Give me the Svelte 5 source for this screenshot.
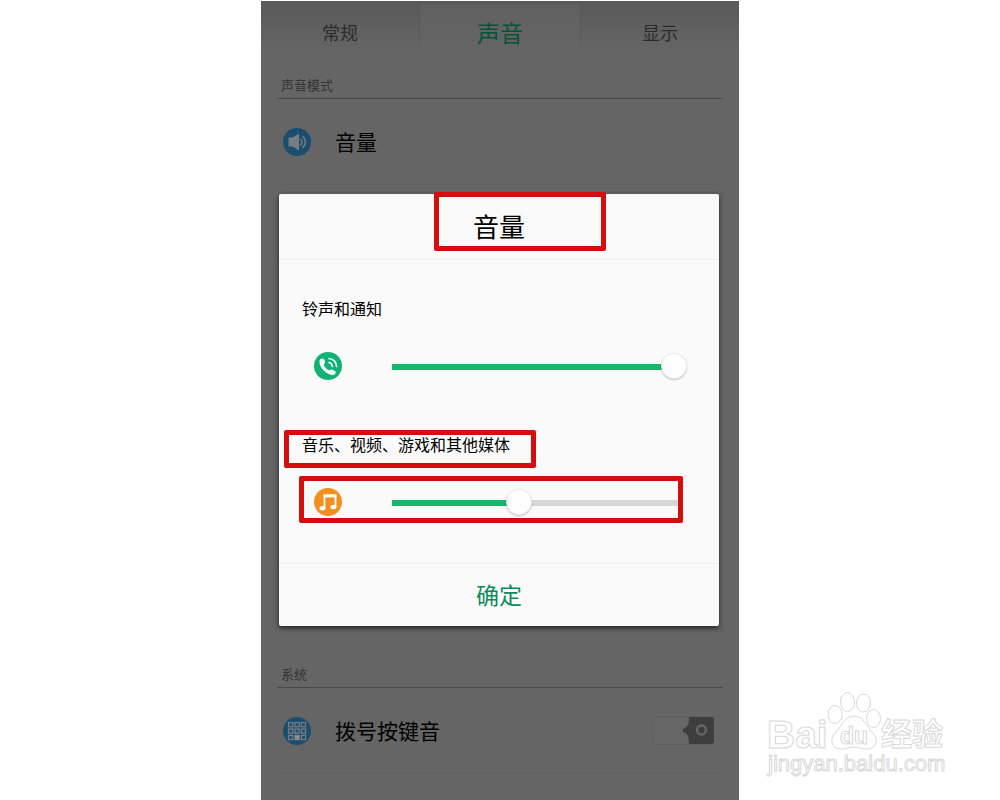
<script>
    let tabs = ["常规", "声音", "显示"];
    let activeTab = "声音";
    let keyTone = false;
    let open = true;

    let volumes = [
        { id: "ring", label: "铃声和通知", value: 100 },
        { id: "media", label: "音乐、视频、游戏和其他媒体", value: 45 },
    ];
</script>

<main class="page">
    <div class="phone">
        <nav class="tabs">
            {#each tabs as tab}
                <button
                    class="tab"
                    class:active={tab === activeTab}
                    on:click={() => (activeTab = tab)}
                >
                    {tab}
                </button>
            {/each}
        </nav>

        <section class="modes">
            <h2>声音模式</h2>
            <div class="row">
                <svg class="icon" viewBox="0 0 28 28" aria-hidden="true">
                    <circle cx="14" cy="14" r="14" fill="#1b4d70" />
                    <path d="M5.500 9.500h4l6.500-4v17l-6.500-4h-4z" fill="#777d81" />
                    <path
                        d="M17.500 11q3 3 0 6M20 8.500q5 5.500 0 11"
                        fill="none"
                        stroke="#777d81"
                        stroke-width="1.500"
                        stroke-linecap="round"
                    />
                </svg>
                <span>音量</span>
            </div>
        </section>

        <section class="system">
            <h2>系统</h2>
            <div class="row">
                <svg class="icon" viewBox="0 0 28 28" aria-hidden="true">
                    <circle cx="14" cy="14" r="14" fill="#1b4d70" />
                    <g fill="none" stroke="#777d81" stroke-width="1.300">
                        {#each [5.6, 12, 18.4] as y}
                            {#each [5.6, 12, 18.4] as x}
                                <rect {x} {y} width="4.200" height="4.200" />
                            {/each}
                        {/each}
                    </g>
                    <rect x="12" y="18.400" width="4.200" height="4.200" fill="#8a8f92" />
                </svg>
                <label for="key-tone">拨号按键音</label>
                <div class="toggle">
                    <svg viewBox="0 0 62 30" aria-hidden="true">
                        <rect x=".5" y=".5" width="60" height="28" rx="3" fill="#666" stroke="#5d5d5d" />
                        <path
                            d="M37 1h22q3 0 3 3v21q0 3-3 3H37q0-8-2-9.500L31.500 16q-2-1.500 0-3L35 10.500Q37 9 37 1z"
                            fill="#3e3e3e"
                        />
                        <circle cx="49.500" cy="14" r="4.500" fill="none" stroke="#666" stroke-width="2.600" />
                    </svg>
                    <input id="key-tone" type="checkbox" bind:checked={keyTone} />
                </div>
            </div>
        </section>

        {#if open}
            <div class="dialog" role="dialog" aria-labelledby="dialog-title">
                <h1 id="dialog-title">音量</h1>
                <div class="volumes">
                    {#each volumes as volume}
                        <div class="volume">
                            <label for={volume.id}>{volume.label}</label>
                            <div class="control">
                                {#if volume.id === "ring"}
                                    <svg class="icon" viewBox="0 0 28 28" aria-hidden="true">
                                        <circle cx="14" cy="14" r="14" fill="#10b275" />
                                        <path
                                            d="M5.500 8.500Q6 6.500 8.500 6.500Q10.500 6.500 11 10Q11 11.500 9.500 12.500Q11 16.500 15.500 18.500Q17 17 18 17.500L21.500 19.500Q22.500 21 20.500 22.500Q17 24 12 20.500Q5 15 5.500 8.500z"
                                            fill="#fff"
                                        />
                                        <path
                                            d="M15 10.500q3 .5 3.300 4M15 6.500q7 1 7.500 8"
                                            fill="none"
                                            stroke="#fff"
                                            stroke-width="1.700"
                                            stroke-linecap="round"
                                        />
                                    </svg>
                                {:else}
                                    <svg class="icon" viewBox="0 0 28 28" aria-hidden="true">
                                        <circle cx="14" cy="14" r="14" fill="#f1901f" />
                                        <path
                                            d="M10.500 20V7.500h11V19"
                                            fill="none"
                                            stroke="#fff"
                                            stroke-width="1.800"
                                        />
                                        <path d="M9.600 6.600h12.800v2.800H9.600z" fill="#fff" />
                                        <ellipse cx="8.500" cy="20.200" rx="2.900" ry="2.200" fill="#fff" />
                                        <ellipse cx="19.500" cy="19" rx="2.900" ry="2.200" fill="#fff" />
                                    </svg>
                                {/if}
                                <input
                                    id={volume.id}
                                    type="range"
                                    min="0"
                                    max="100"
                                    bind:value={volume.value}
                                    style="--level: {volume.value / 100}"
                                />
                            </div>
                        </div>
                    {/each}
                </div>
                <button class="confirm" on:click={() => (open = false)}>确定</button>

                <div class="mark mark-title"></div>
                <div class="mark mark-label"></div>
                <div class="mark mark-slider"></div>
            </div>
        {/if}
    </div>

    <svg class="watermark" viewBox="0 0 190 100" role="img" aria-label="Baidu 经验">
        <g fill="#fff" stroke="#d8d8d8" stroke-width="1">
            <ellipse cx="75" cy="29.500" rx="7" ry="9" />
            <ellipse cx="87.500" cy="17" rx="7" ry="9.500" />
            <ellipse cx="103.500" cy="18" rx="7" ry="9" />
            <ellipse cx="113.500" cy="33.500" rx="7" ry="9" />
            <path
                d="M94 31C104 31 106 41 112 47C119 54 117 64 107 64C101 64 98 62 94 62C90 62 87 64 81 64C71 64 69 54 76 47C82 41 84 31 94 31z"
            />
            <text class="bai" x="7" y="63">Bai</text>
            <text class="du" x="80" y="59">du</text>
            <text class="jingyan" x="121" y="60">经验</text>
            <text class="url" x="8" y="86">jingyan.baidu.com</text>
        </g>
    </svg>
</main>

<style>
    :global(body) {
        background: #fff;
        font-family: "Liberation Sans", "Noto Sans CJK SC", sans-serif;
    }

    .page {
        position: relative;
        box-sizing: border-box;
        min-height: 100vh;
        padding-top: 1px;
        display: flex;
        justify-content: center;
    }

    .phone {
        position: relative;
        width: 100%;
        max-width: 478px;
        background: #656565;
        color: #000;
    }

    button {
        border: 0;
        padding: 0;
        font-family: inherit;
        cursor: pointer;
    }

    .tabs {
        display: grid;
        grid-template-columns: 1fr 162px 1fr;
        height: 52px;
        padding-top: 4px;
        box-sizing: border-box;
        background: linear-gradient(#5a5a5a, #656565);
    }

    .tab {
        padding-top: 6px;
        background: none;
        font-size: 18px;
        color: #2b2b2b;
    }

    .tab.active {
        border: solid;
        border-width: 0 1px;
        border-image: linear-gradient(#515151, #626262) 1;
        background: linear-gradient(#616161, #656565);
        font-size: 23px;
        color: #06533a;
    }

    section {
        margin: 0 16px;
    }

    h2 {
        margin: 0;
        padding: 23px 4px 2px;
        border-bottom: 1px solid #484848;
        font-size: 13px;
        line-height: 20px;
        font-weight: 400;
        color: #333;
    }

    .modes {
        min-height: 589px;
    }

    .row {
        display: flex;
        align-items: center;
        height: 85px;
        padding: 0 9px 0 6px;
        border-bottom: 1px solid #606060;
        font-size: 21px;
    }

    .row span,
    .row label {
        padding-bottom: 2px;
    }

    .row .icon {
        margin-right: 24px;
    }

    .icon {
        flex: none;
        width: 28px;
        height: 28px;
    }

    .toggle {
        position: relative;
        width: 62px;
        height: 30px;
        margin-left: auto;
    }

    .toggle input {
        position: absolute;
        inset: 0;
        width: 100%;
        height: 100%;
        margin: 0;
        opacity: 0;
    }

    .dialog {
        position: absolute;
        top: 193px;
        left: 18px;
        right: 20px;
        border-radius: 2px;
        background: #fafafa;
        box-shadow: 0 2px 5px rgba(0, 0, 0, 0.7);
    }

    h1 {
        margin: 0;
        padding-top: 3px;
        border-bottom: 1px solid #eee;
        font-size: 26px;
        line-height: 62px;
        font-weight: 400;
        text-align: center;
    }

    .volumes {
        display: flex;
        flex-direction: column;
        gap: 54px;
        padding: 38px 32px 47px 23px;
    }

    .volume label {
        display: block;
        margin-bottom: 30px;
        font-size: 16px;
        line-height: 24px;
    }

    .control {
        display: flex;
        align-items: center;
        gap: 37px;
        height: 28px;
        padding-left: 12px;
    }

    input[type="range"] {
        appearance: none;
        flex: 1;
        min-width: 0;
        height: 26px;
        margin: 0;
        background: none;
    }

    input[type="range"]::-webkit-slider-runnable-track {
        height: 26px;
        background: linear-gradient(
                to right,
                transparent 13px,
                #18b56d 13px calc(13px + (100% - 26px) * var(--level)),
                #d7d7d7 calc(13px + (100% - 26px) * var(--level)) calc(100% - 8px),
                transparent calc(100% - 8px)
            )
            0 11px / 100% 6px no-repeat;
    }

    input[type="range"]::-webkit-slider-thumb {
        appearance: none;
        width: 26px;
        height: 26px;
        border: 1px solid #ececec;
        border-radius: 50%;
        background: #fefefe;
        box-shadow: 0 1px 2px rgba(0, 0, 0, 0.2);
    }

    .confirm {
        display: block;
        width: 100%;
        height: 63px;
        padding-bottom: 3px;
        border-top: 1px solid #eee;
        background: none;
        font-size: 23px;
        color: #0c8b5c;
    }

    /* red frames around the highlighted parts */
    .mark {
        position: absolute;
        box-sizing: border-box;
        border: 5px solid #d60d0d;
        border-radius: 2px;
        pointer-events: none;
    }

    .mark-title {
        top: -2px;
        left: 155px;
        width: 172px;
        height: 59px;
    }

    .mark-label {
        top: 236px;
        left: 5px;
        width: 252px;
        height: 38px;
    }

    .mark-slider {
        top: 282px;
        left: 20px;
        width: 384px;
        height: 47px;
    }

    .watermark {
        position: absolute;
        right: 50px;
        bottom: 15px;
        width: 190px;
        height: 100px;
    }

    .bai {
        font-size: 39px;
        font-weight: 700;
    }

    .du {
        font-size: 23px;
        font-weight: 700;
    }

    .jingyan {
        font-size: 31px;
        font-weight: 700;
    }

    .url {
        font-size: 22px;
    }
</style>
